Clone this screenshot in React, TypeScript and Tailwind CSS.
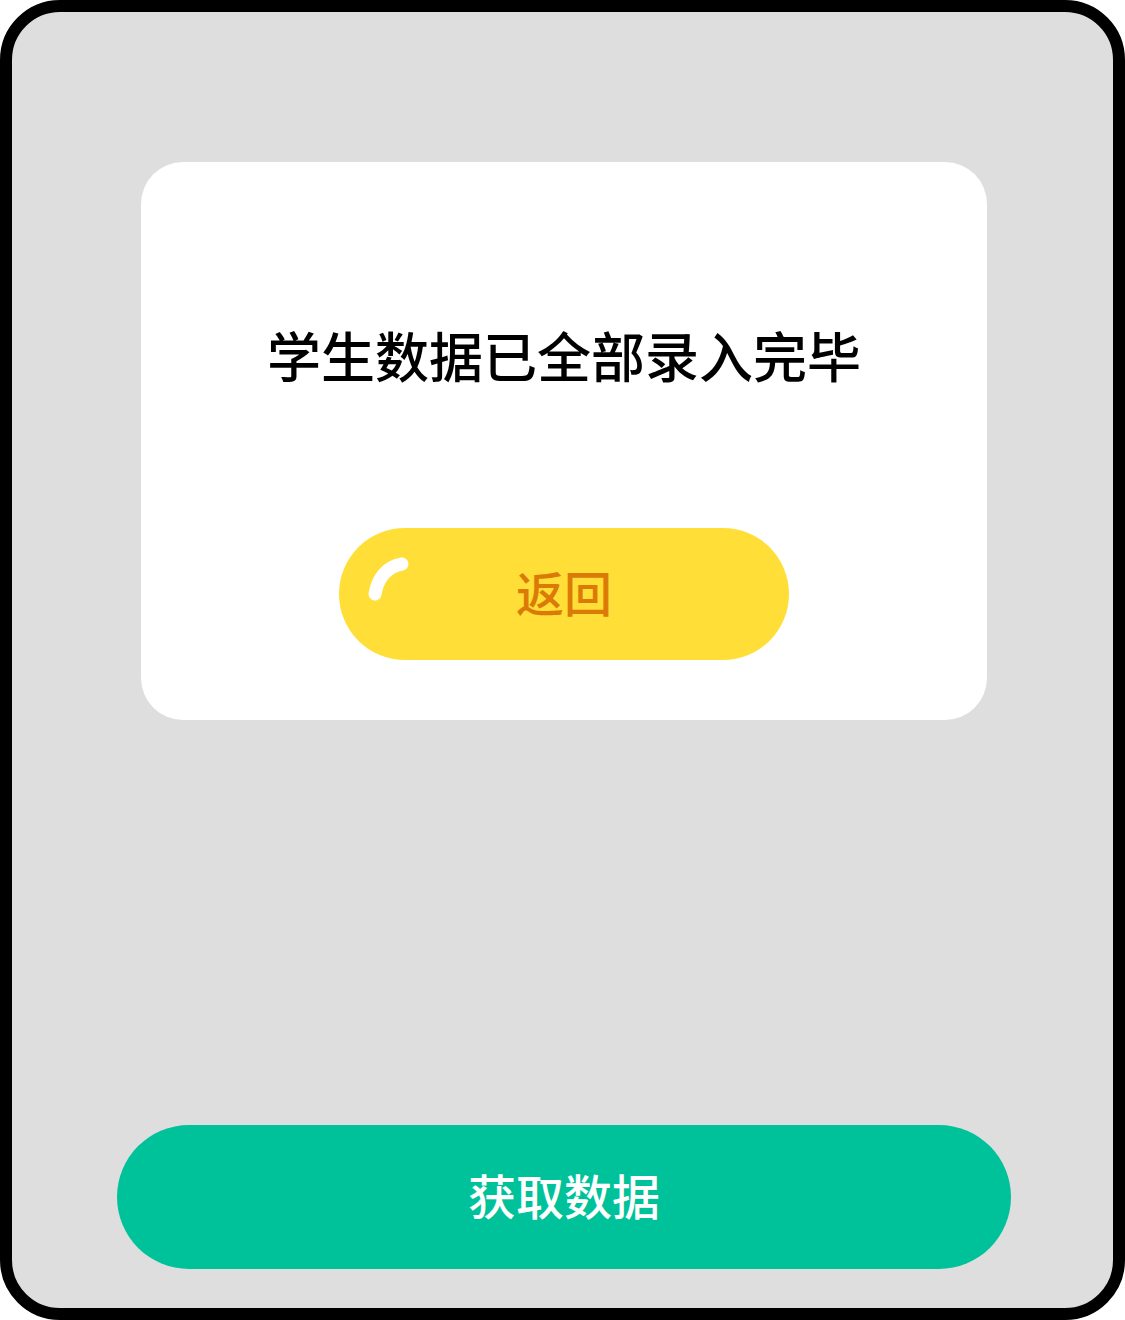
export default function App() {
  const font = { fontFamily: '"Noto Sans CJK SC", sans-serif' };
  return (
    <div className="w-[1125px] h-[1320px] bg-white" style={font}>
      <div className="w-full h-full border-[12px] border-black rounded-[60px] bg-[#dedede] flex flex-col items-start">
        <div className="ml-[129px] mt-[150px] w-[846px] h-[558px] bg-white rounded-[42px] flex flex-col items-center">
          <div className="mt-[163px] mb-[2px] h-[60px] leading-[60px] text-[54px] font-medium text-black whitespace-nowrap">学生数据已全部录入完毕</div>
          <div className="relative mt-[141px] w-[450px] h-[132px] rounded-full bg-[#ffdf37] flex items-center justify-center pb-[6px]">
            <svg className="absolute left-[24px] top-[24px]" width="54" height="54" viewBox="0 0 54 54" fill="none">
              <path d="M12 42C14.5 28 22 15 39 12" stroke="#ffffff" strokeWidth="13" strokeLinecap="round" />
            </svg>
            <span className="text-[48px] leading-[60px] font-medium text-[#dc7a08]">返回</span>
          </div>
        </div>
        <div className="ml-[105px] mt-[405px] w-[894px] h-[144px] rounded-full bg-[#00c29a] flex items-center justify-center pb-[6px]">
          <span className="text-[48px] leading-[60px] font-medium text-white">获取数据</span>
        </div>
      </div>
    </div>
  );
}
